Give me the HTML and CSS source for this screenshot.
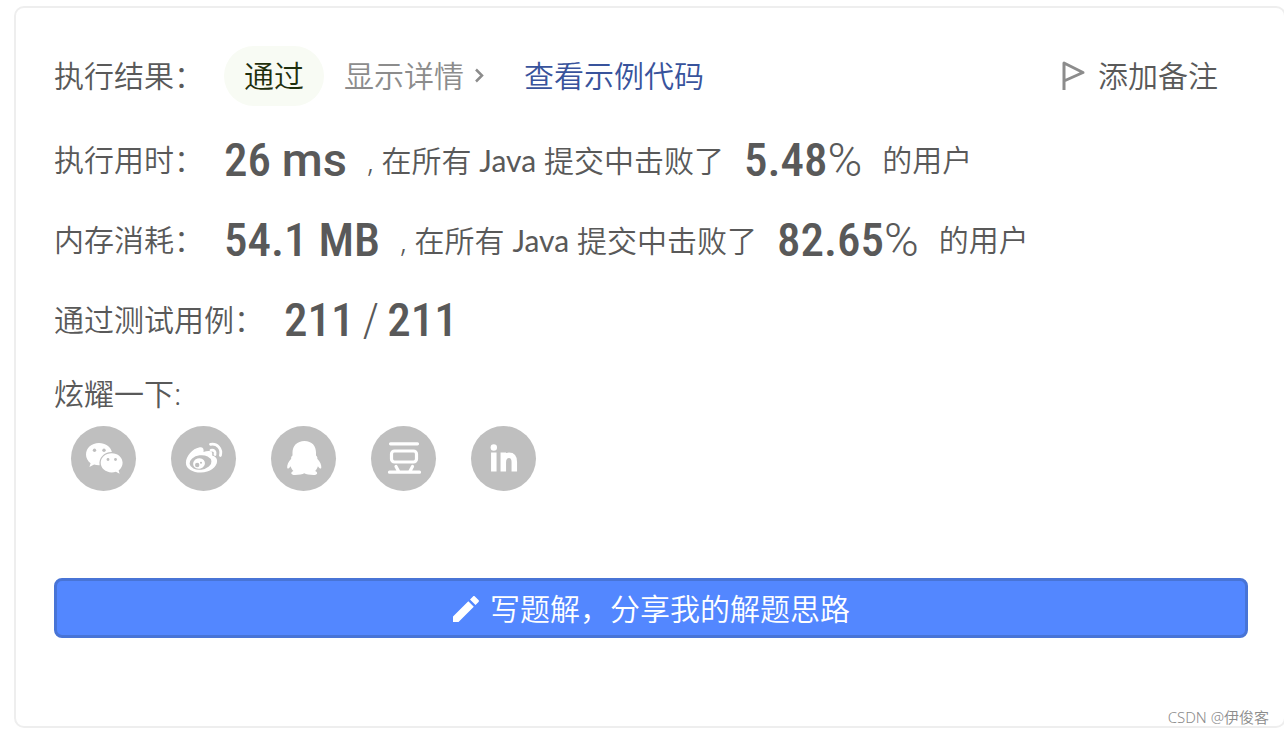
FILE: index.html
```html
<!DOCTYPE html>
<html lang="zh-CN">
<head>
  <meta charset="UTF-8">
  <meta name="viewport" content="width=device-width, initial-scale=1.0">
  <title>执行结果</title>
  <link rel="stylesheet" href="styles.css">
</head>
<body>
  <main class="card">
    <div class="row header">
      <span>执行结果：</span>
      <span class="status">通过</span>
      <a class="detail" href="#">显示详情
        <svg class="arrow" viewBox="0 0 10 16"><path d="M2 1.500l6 6-6 6"/></svg>
      </a>
      <a class="sample" href="#">查看示例代码</a>
      <button class="note" type="button">
        <svg class="flag" viewBox="0 0 24 30"><path d="M2 29V2l19 9.500L2 20"/></svg>
        添加备注
      </button>
    </div>

    <div class="row">
      <span>执行用时：</span>
      <span class="num">26 <span class="wide">ms</span></span>
      <span>, 在所有 <span class="lang">Java</span> 提交中击败了</span>
      <span class="num">5.48<span class="wide thin">%</span></span>
      <span>的用户</span>
    </div>

    <div class="row">
      <span>内存消耗：</span>
      <span class="num">54.1 MB</span>
      <span>, 在所有 <span class="lang">Java</span> 提交中击败了</span>
      <span class="num">82.65<span class="wide thin">%</span></span>
      <span>的用户</span>
    </div>

    <div class="row">
      <span>通过测试用例：</span>
      <span class="num cases"><span>211</span><span class="thin">/</span><span>211</span></span>
    </div>

    <div class="share-title">炫耀一下:</div>
    <div class="share">
      <a class="share-link" href="#" aria-label="微信">
        <svg viewBox="0 0 65 65">
          <path fill="#fff" d="M28 17c-7.500 0-13 5-13 11.500 0 3.600 1.700 6.500 4.600 8.700l-1.200 3.800 4.700-2.400c1.800.5 3.500.8 5.500.7-1.200-7.500 4.600-13.500 12.300-13.300C39.500 20.700 34.400 17 28 17z"/>
          <path fill="#fff" d="M40.700 27.200c-6.200 0-11 4.200-11 9.600s4.800 9.600 11 9.600c1.500 0 2.900-.3 4.200-.7l3.700 2-1-3.200c2.500-1.900 4-4.500 4-7.700 0-5.400-4.800-9.600-10.900-9.600z"/>
          <g fill="#bfbfbf"><circle cx="23.500" cy="24.300" r="1.700"/><circle cx="33" cy="24.300" r="1.700"/><circle cx="37" cy="33.500" r="1.400"/><circle cx="44.500" cy="33.500" r="1.400"/></g>
        </svg>
      </a>
      <a class="share-link" href="#" aria-label="微博">
        <svg viewBox="0 0 65 65">
          <path fill="#fff" d="M28 21.500c3.500-.7 5.200.8 4.500 4.600 4.500-1.800 10-1.700 8.600 3.400 3.200 1 5 2.600 5 5.600 0 6-7.200 11.400-16.200 11.400-8.200 0-15-3.800-15-9.600 0-6.700 7-14.500 13.100-15.400z"/>
          <ellipse cx="29.500" cy="36.500" rx="11" ry="7.200" fill="#bfbfbf" transform="rotate(-7 29.500 36.500)"/>
          <ellipse cx="28" cy="37.500" rx="6" ry="5.200" fill="#fff" transform="rotate(-18 28 37.500)"/>
          <circle cx="26.200" cy="39" r="2.200" fill="#bfbfbf"/><circle cx="30" cy="36.800" r="1" fill="#bfbfbf"/>
          <path fill="none" stroke="#fff" stroke-width="2.800" stroke-linecap="round" d="M39.500 18.300c6.500-1.300 11.700 4.300 9.900 11.200M40 24.300c3-.6 4.900 1.500 4 4.200"/>
        </svg>
      </a>
      <a class="share-link" href="#" aria-label="QQ">
        <svg viewBox="0 0 65 65">
          <path fill="#fff" d="M33.500 15C26 15 21.500 20 21.500 26.500v3c-1.300 1-1.500 2-1.300 3.200-2.700 3-4.400 6.300-4 9 .5 1.800 1.800.4 3.400-1.500.5 1.800 1.400 3.400 2.800 4.700-3 .9-3 4.100 1.600 4.100 4 0 7.600-.5 9.300-1.700 1.700 1.200 5.300 1.700 9.300 1.700 4.500 0 4.400-3.200 1.500-4.100 1.400-1.300 2.300-2.900 2.800-4.700 1.600 1.900 2.900 3.300 3.400 1.500.4-2.700-1.300-6-4-9 .2-1.200 0-2.200-1.300-3.200v-3C45 20 41 15 33.500 15z"/>
        </svg>
      </a>
      <a class="share-link" href="#" aria-label="豆瓣">
        <svg viewBox="0 0 65 65" fill="none" stroke="#fff" stroke-width="3.200" stroke-linecap="round" stroke-linejoin="round">
          <path d="M19.500 17.800h27M18.500 46.200h30M25 40.500l3 5.500M41.500 40.500l-3 5.500"/><rect x="20.500" y="25" width="25" height="11" rx="3"/>
        </svg>
      </a>
      <a class="share-link" href="#" aria-label="领英">
        <svg viewBox="0 0 65 65" fill="none" stroke="#fff" stroke-width="5.500">
          <path d="M22.800 26.500v19M32.300 45.500v-19M32.300 36.500c0-5 2-7.300 5.700-7.300 3.500 0 5.300 2.300 5.300 6.800v9.500"/><circle cx="22.800" cy="21.500" r="3.200" fill="#fff" stroke="none"/>
        </svg>
      </a>
    </div>

    <button class="write" type="button">
      <svg class="pen" viewBox="0 0 28 28"><path d="M1 21.500V27h5.500L21.800 11.700l-5.500-5.500zM26.500 7c.6-.6.600-1.300 0-1.900L22.900 1.500c-.6-.6-1.300-.6-1.900 0l-3 3 5.500 5.500z"/></svg>
      写题解，分享我的解题思路
    </button>
  </main>
  <div class="watermark">CSDN @伊俊客</div>
</body>
</html>
```
FILE: styles.css
```css
* {
  box-sizing: border-box;
}
body {
  position: relative;
  margin: 0;
  padding: 6px 0 6px 14px;
  overflow-x: hidden;
  background: #fff;
  color: #595959;
  font-family: "Noto Sans", "Noto Sans CJK SC", sans-serif;
  font-size: 30px;
  font-weight: 350;
  line-height: 40px;
}
a {
  color: inherit;
  text-decoration: none;
}
button {
  padding: 0;
  border: none;
  background: none;
  color: inherit;
  font: inherit;
  cursor: pointer;
}
.card {
  margin-right: -2px;
  padding: 38px 36px 88px 38px;
  border: 2px solid #eee;
  border-radius: 10px;
}
.row {
  display: flex;
  align-items: center;
  gap: 20px;
  height: 80px;
  white-space: nowrap;
}
.header {
  height: 60px;
  margin-bottom: 14px;
}
.status {
  padding: 10px 20px;
  border-radius: 30px;
  background: #f8fbf4;
  color: #1f2f0c;
}
.detail {
  display: flex;
  align-items: center;
  gap: 10px;
  color: #8c8c8c;
}
.arrow {
  width: 10px;
  height: 16px;
  fill: none;
  stroke: #8c8c8c;
  stroke-width: 2.5;
}
.sample {
  margin-left: 20px;
  color: #38539c;
}
.note {
  display: flex;
  align-items: center;
  gap: 12px;
  margin-left: auto;
  margin-right: 30px;
}
.flag {
  width: 24px;
  height: 30px;
  fill: none;
  stroke: #8c8c8c;
  stroke-width: 3;
  stroke-linejoin: round;
}
.lang {
  font-family: Lato, sans-serif;
  font-weight: 400;
}
.num {
  font-family: "Roboto Condensed", Roboto, sans-serif;
  font-size: 47px;
  font-weight: 500;
}
.wide {
  font-family: Roboto, sans-serif;
}
.thin {
  font-weight: 300;
}
.cases {
  display: flex;
  gap: 8px;
}
.share-title {
  margin-top: 14px;
}
.share {
  display: flex;
  gap: 35px;
  margin-top: 12px;
  padding-left: 17px;
}
.share-link {
  width: 65px;
  height: 65px;
  border-radius: 50%;
  background: #bfbfbf;
}
.share-link svg {
  display: block;
}
.write {
  display: flex;
  align-items: center;
  justify-content: center;
  gap: 10px;
  width: 100%;
  height: 60px;
  margin-top: 87px;
  padding-top: 2px;
  border: 3px solid #4874d6;
  border-radius: 8px;
  background: #5387ff;
  color: #fff;
}
.pen {
  width: 28px;
  height: 28px;
  fill: #fff;
}
.watermark {
  position: absolute;
  right: 15px;
  bottom: 7px;
  color: #8c8c8c;
  font-size: 15px;
  line-height: 20px;
}
```
